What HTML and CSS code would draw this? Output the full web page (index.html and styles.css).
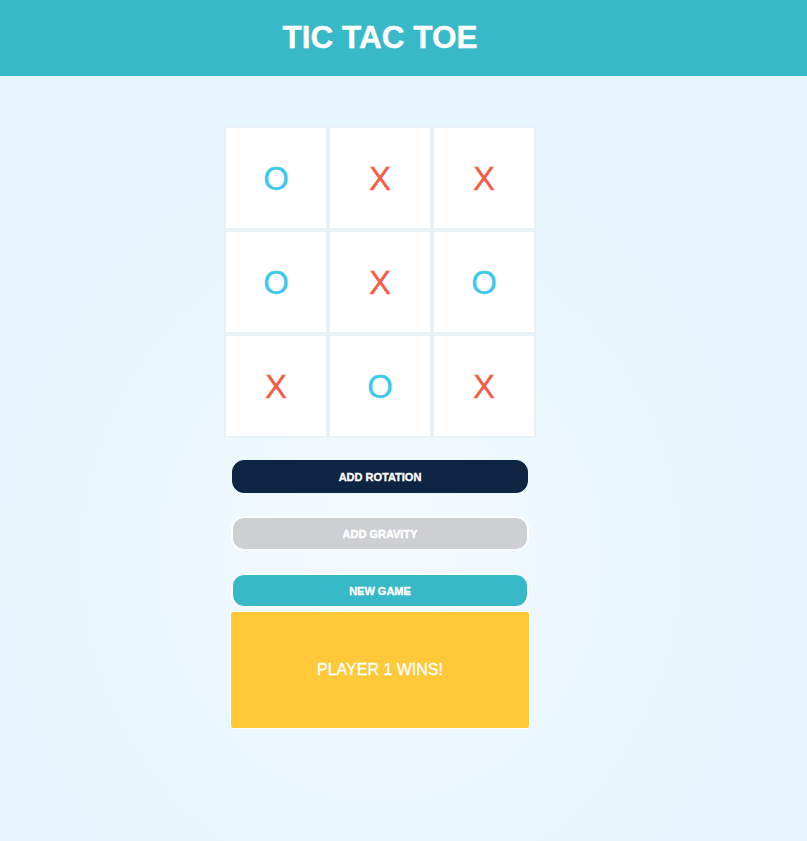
FILE: index.html
```html
<!DOCTYPE html>
<html>
<head>
<meta charset="utf-8">
<title>Tic Tac Toe</title>
<link rel="stylesheet" href="styles.css">
</head>
<body>
<header class="topbar">
  <div class="wrap"><h1 class="title">TIC TAC TOE</h1></div>
</header>
<main class="wrap main">
  <div class="board">
    <div class="cell o">O</div>
    <div class="cell x">X</div>
    <div class="cell x">X</div>
    <div class="cell o">O</div>
    <div class="cell x">X</div>
    <div class="cell o">O</div>
    <div class="cell x">X</div>
    <div class="cell o">O</div>
    <div class="cell x">X</div>
  </div>
  <div class="controls">
    <button class="btn btn-rotation">ADD ROTATION</button>
    <button class="btn btn-gravity">ADD GRAVITY</button>
    <button class="btn btn-new">NEW GAME</button>
  </div>
  <div class="result">PLAYER 1 WINS!</div>
</main>
</body>
</html>
```
FILE: styles.css
```css
html, body {
  margin: 0;
  padding: 0;
  height: 100%;
}
body {
  font-family: "Liberation Sans", Arial, sans-serif;
  background: radial-gradient(ellipse 420px 460px at 380px 560px, #f3faff 0%, #ebf7fe 55%, #e5f4fd 100%);
  background-color: #e6f5fd;
  min-height: 841px;
}
.wrap {
  width: 760px;
}
.topbar {
  background: #38b9c7;
  height: 76px;
}
.topbar .wrap {
  height: 76px;
  display: flex;
  align-items: center;
  justify-content: center;
}
.title {
  margin: 0;
  color: #fff;
  font-size: 31.5px;
  font-weight: bold;
  line-height: 1;
  -webkit-text-stroke: 0.4px #fff;
}
.main {
  display: flex;
  flex-direction: column;
  align-items: center;
  padding-top: 50px;
}
.board {
  display: grid;
  grid-template-columns: repeat(3, 100px);
  grid-template-rows: repeat(3, 100px);
  gap: 4px;
  padding: 2px;
  background: #e7f1f7;
}
.cell {
  background: #fff;
  display: flex;
  align-items: center;
  justify-content: center;
  font-size: 33px;
  line-height: 1;
}
.cell.o { color: #3ac8ec; -webkit-text-stroke: 0.3px #3ac8ec; }
.cell.x { color: #f45d48; -webkit-text-stroke: 0.3px #f45d48; }
.controls {
  margin-top: 22px;
  display: flex;
  flex-direction: column;
  gap: 24px;
}
.btn {
  width: 296px;
  height: 33px;
  box-sizing: border-box;
  border-radius: 12px;
  border: 1px solid #fff;
  font-family: "Liberation Sans", Arial, sans-serif;
  font-weight: bold;
  font-size: 11px;
  color: #fff;
  -webkit-text-stroke: 0.35px #fff;
  padding: 0;
  cursor: pointer;
}
.btn-rotation { background: #0d2542; border-color: #0d2542; }
.btn-gravity { background: #cecfd3; box-shadow: 0 0 0 1px #fff; }
.btn-new { background: #38b9c7; box-shadow: 0 0 0 1px #fff; }
.result {
  margin-top: 4px;
  width: 300px;
  height: 118px;
  box-sizing: border-box;
  background: #ffc93a;
  border: 1px solid #fff;
  border-radius: 3px;
  color: #fff;
  font-size: 16px;
  -webkit-text-stroke: 0.3px #fff;
  display: flex;
  align-items: center;
  justify-content: center;
}
```
